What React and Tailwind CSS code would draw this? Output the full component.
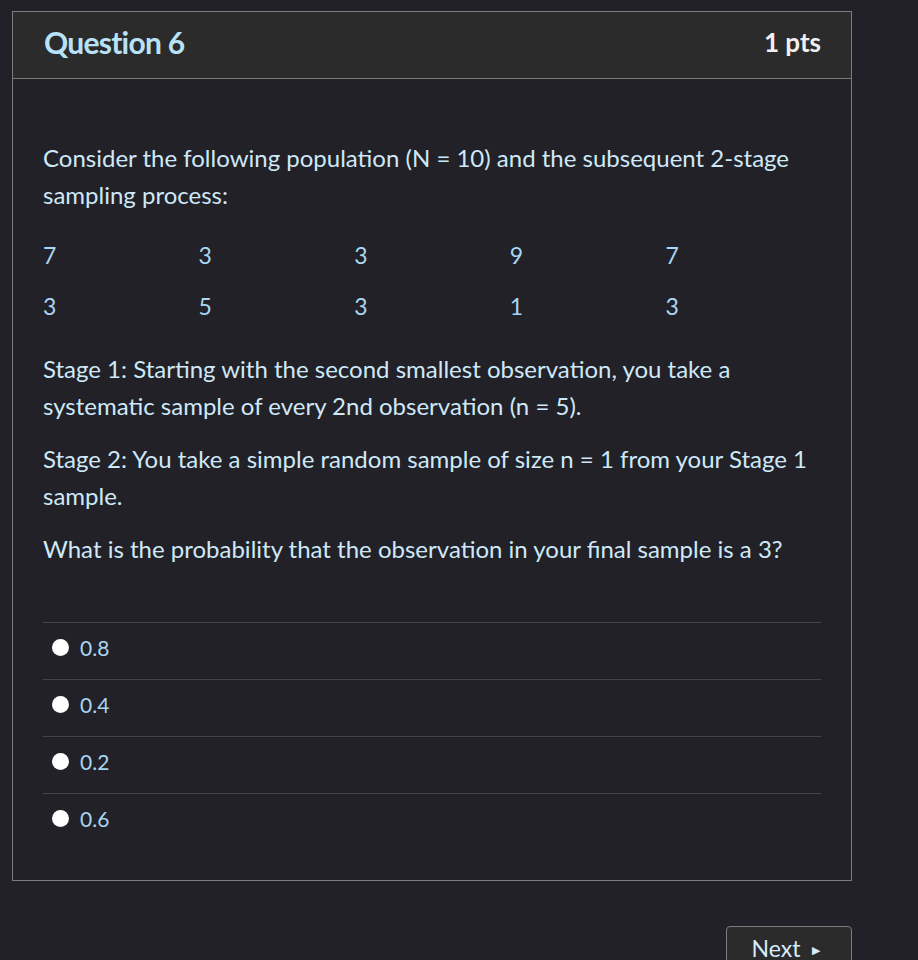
export default function App() {
  const rows = [
    [7, 3, 3, 9, 7],
    [3, 5, 3, 1, 3],
  ]
  const answers = ['0.8', '0.4', '0.2', '0.6']

  return (
    <div
      className="min-h-[960px] w-full bg-[#212127] pt-[11px] pl-[12px]"
      style={{ fontFamily: 'Lato, "Open Sans", sans-serif' }}
    >
      <div className="w-[840px] border border-[#7c7c7c]">
        <div className="flex h-[67px] items-center justify-between border-b border-[#7c7c7c] bg-[#2b2b2b] pb-[5px] pl-[31px] pr-[30px]">
          <h2 className="text-[30px] font-bold tracking-tight text-[#b9e2f8]">Question 6</h2>
          <span className="text-[26px] font-bold text-[#f0f0f0]">1 pts</span>
        </div>

        <div className="px-[30px] pt-[60px] pb-[30px] text-[24px] leading-[37px] text-[#cfe8f8]">
          <p>
            Consider the following population (N = 10) and the subsequent 2-stage sampling process:
          </p>

          <div className="mt-[17px]">
            {rows.map((r, i) => (
              <div key={i} className="grid h-[51px] grid-cols-5 items-center text-[23px] text-[#a9d6f2]">
                {r.map((v, j) => (
                  <span key={j}>{v}</span>
                ))}
              </div>
            ))}
          </div>

          <p className="mt-[18px]">
            Stage 1: Starting with the second smallest observation, you take a systematic sample of every 2nd observation (n = 5).
          </p>
          <p className="mt-[16px]">
            Stage 2: You take a simple random sample of size n = 1 from your Stage 1 sample.
          </p>
          <p className="mt-[16px]">What is the probability that the observation in your final sample is a 3?</p>

          <div className="mt-[55px]">
            {answers.map((a) => (
              <div key={a} className="flex h-[57px] items-center gap-[11px] border-t border-[#444448] pb-[7px] pl-[9px]">
                <span className="h-[17px] w-[17px] rounded-full bg-white" />
                <span className="text-[21px] text-[#a9d6f2]">{a}</span>
              </div>
            ))}
          </div>
        </div>
      </div>

      <div className="mt-[45px] flex w-[840px] justify-end">
        <button className="flex h-[40px] w-[126px] items-start justify-center gap-3 rounded-[4px] border border-[#7c7c7c] bg-[#2b2b2b] pt-[10px] pr-[6px] text-[23px] leading-none text-[#d6ecfa]">
          Next
          <span className="pt-[7px] text-[11px]">▶</span>
        </button>
      </div>
    </div>
  )
}
